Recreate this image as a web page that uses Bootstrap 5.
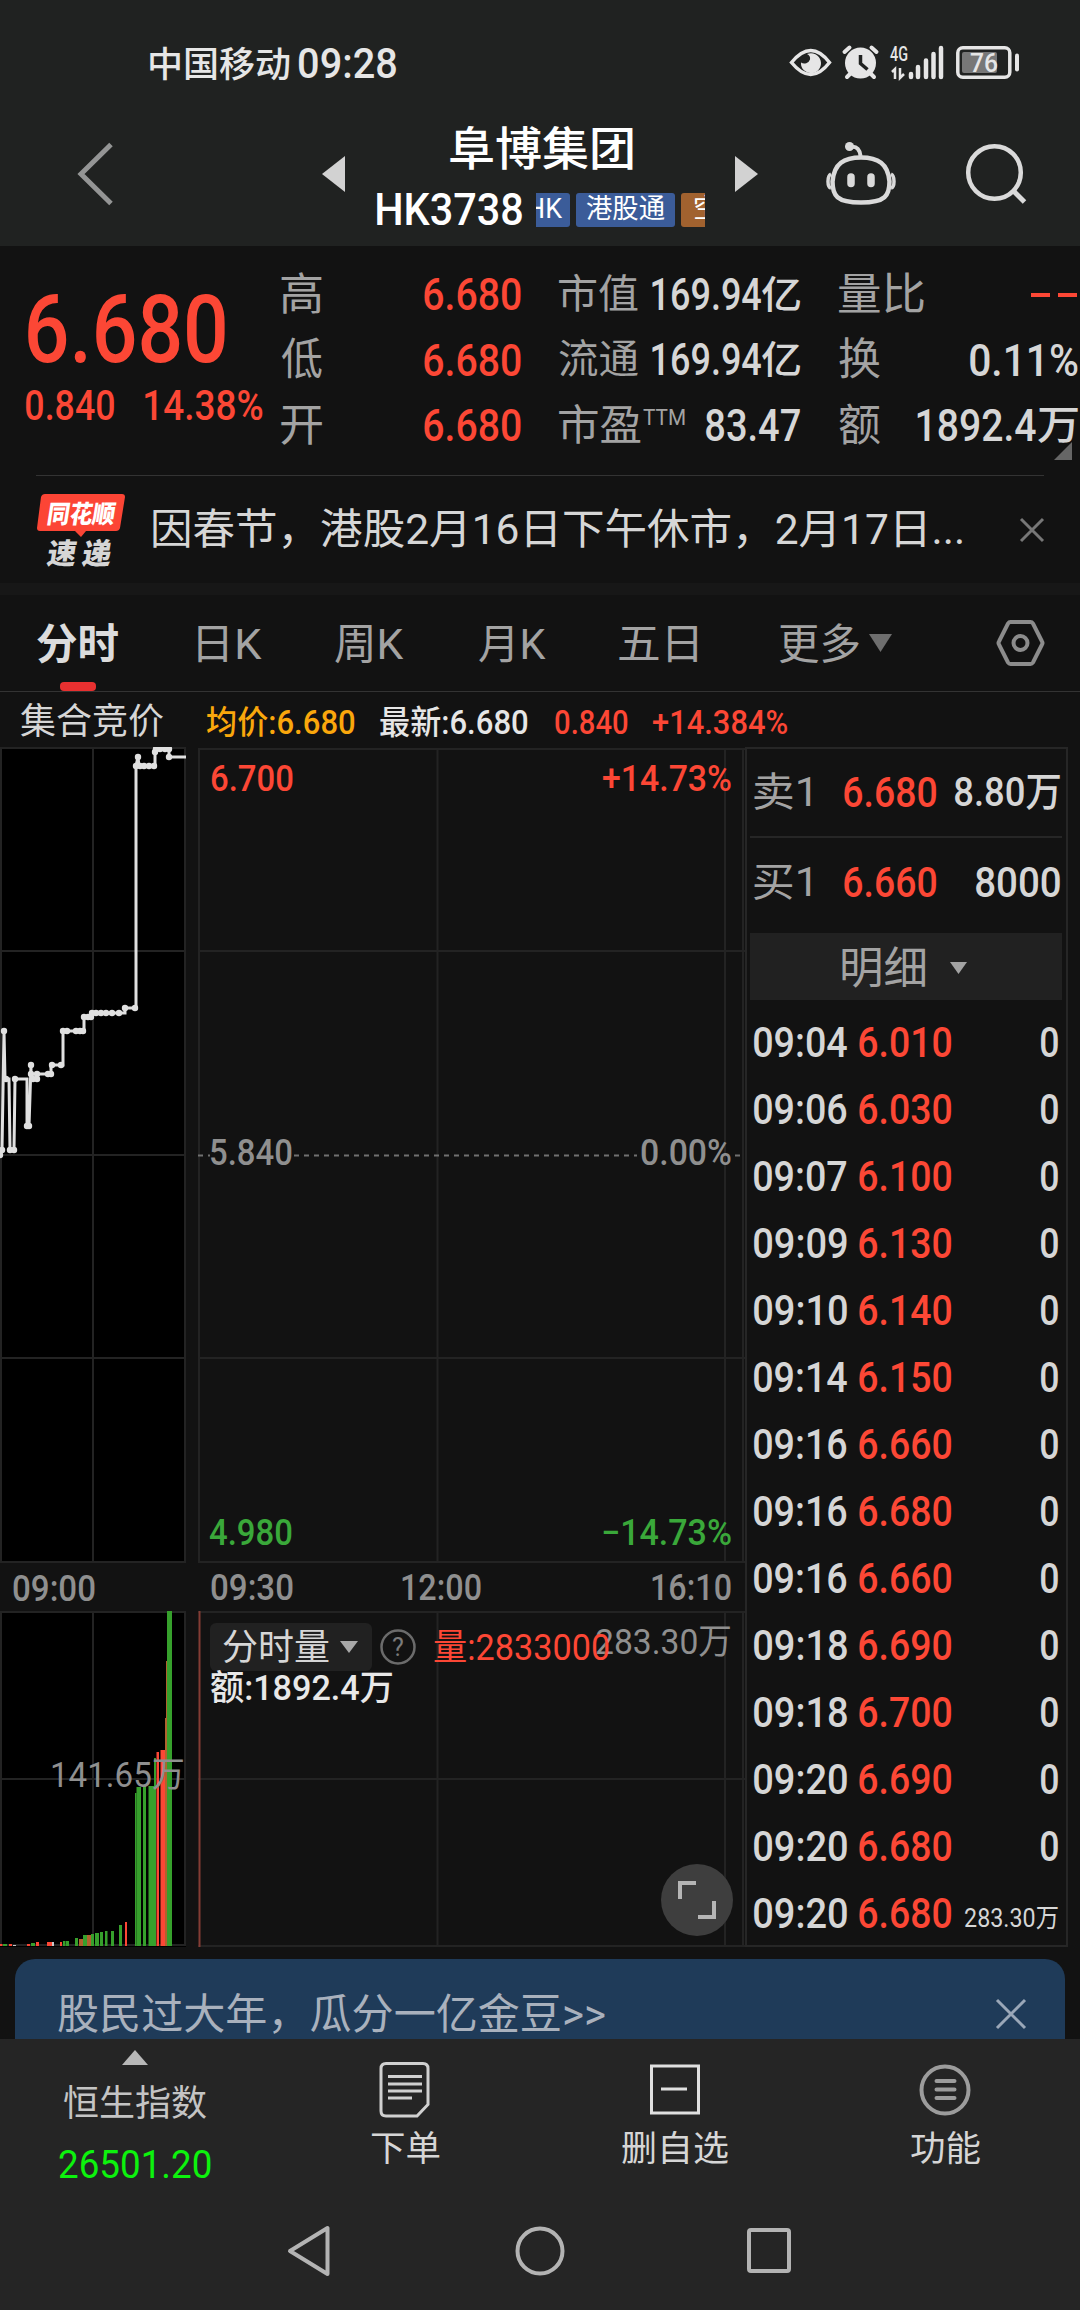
<!DOCTYPE html>
<html lang="zh-CN" data-bs-theme="dark">
<head>
<meta charset="utf-8">
<meta name="viewport" content="width=device-width, initial-scale=1">
<title>阜博集团 HK3738</title>
<link href="https://cdn.jsdelivr.net/npm/bootstrap@5.3.0/dist/css/bootstrap.min.css" rel="stylesheet">
<style>
:root{--up:#fc4735;--down:#3aa83a;--txt:#d6d6d6;--dim:#a3a3a3;--line:#262626;--panel:#121212;--bar:#252525}
body{width:1080px;height:2310px;margin:0;overflow:hidden;background:var(--panel);color:var(--txt);font-family:Roboto,"Noto Sans CJK SC",sans-serif;font-size:36px;line-height:1}
svg{display:block;flex:none;overflow:visible}
.ft{display:inline-block;white-space:nowrap;flex:none;overflow:visible;text-align:left}
.ft>span{display:inline-block;transform-origin:0 50%}
.n5{font-weight:500}
.up{color:var(--up)}.dim{color:var(--dim)}.amber{color:#faa70c}
.f26{font-size:26px}.f32{font-size:32px}.f33{font-size:33px}.f35{font-size:35px}.f36{font-size:36px}.f38{font-size:38px}.f40{font-size:40px}.f42{font-size:42px}.f44{font-size:44px}.f45{font-size:45px}.f46{font-size:46px}

.app-head{height:246px;background:#202221}
.statusbar{height:96px;padding:30px 61px 0 150px;color:#e6e6e6}
.titlebar{display:grid;grid-template-columns:245px 55px 358px 91px 140px auto;align-items:center;height:150px;padding:6px 0 0 77px}
.titlebox{width:328px;height:144px;padding-top:17px;color:#fff}
.tname{height:60px;margin-bottom:14px}
.tags{width:169px;height:34px;overflow:hidden;gap:6px}
.tg{height:34px;border-radius:3px;background:#3b5c99;font-size:27px;line-height:33px;flex:none}
.tg-a{width:34px;border-radius:0 3px 3px 0;overflow:hidden}
.tg-b{width:99px}
.tg-c{width:40px;background:#a1622f;padding-left:12px}

.quote{height:229px;padding-top:16px;display:grid;grid-template-columns:281px 278px 280px 241px}
.qprice{padding:28px 0 0 26px}
.qbig{font-size:94px;line-height:80px}
.qsub{gap:31px;line-height:40px;margin-top:16px}
.qrow{height:65.5px}
.qcol1{padding-right:38px}
.ttm{font-size:22px;margin-top:-16px;margin-left:2px}
.corner{right:8px;bottom:15px}

.news{height:108px;margin:0 36px;border-top:1px solid #333}
.news-logo{width:88px;margin-left:1px;margin-right:28px}
.strip{height:12px;background:#171717}
.ktabs{height:97px;padding:0 37px;border-bottom:1px solid #333;display:grid;grid-template-columns:161px 137px 144px 140px 160px 218px auto;align-items:center}
.ktabs>*{height:96px;display:flex;align-items:center;position:relative;padding-top:4px}
.ktabs>:last-child{padding-top:0}
.kline{position:absolute;left:23px;bottom:0;width:36px;height:9px;border-radius:4px;background:#e83030}
.legend{height:55px;padding-left:21px;display:grid;grid-template-columns:186px 173px 175px 98px auto;align-items:center;padding-top:5px}

.board{height:1200px}
.chart{width:745px;height:1200px}
.sel{left:210px;top:876px;width:162px;height:48px;border-radius:6px;background:#212121;padding:2px 0 0 13px;gap:11px}
.help{left:381px;top:882px}
.volnum{left:434px;top:883px;line-height:36px}
.amt{left:211px;top:924px;line-height:36px;color:#e8e8e8}
.expand{left:661px;top:1117px;width:72px;height:72px;background:#3e3e3e}
.book{width:323px;border:2px solid var(--line);padding:0 4px 0 3px}
.brow{height:89px;display:grid;grid-template-columns:90px 93px 1fr;align-items:center;padding-left:4px;padding-right:2px;border-bottom:2px solid var(--line)}
.brow+.brow{border-bottom:0;height:95px;padding-bottom:5px}
.bhead{height:67px;background:#212121;padding-left:92px;gap:25px}
.ticks{padding-top:9px}
.tick{height:67px;display:grid;grid-template-columns:105px 93px 1fr;align-items:center;padding:0 4px}

.promo{height:80px;margin:12px 15px 0;border-radius:20px 20px 0 0;background:#1f3b59;color:#a9b1bd;padding:30px 39px 0 43px}
.dock{height:140px;background:var(--bar);display:grid;grid-template-columns:270px 270px 270px 270px}
.dock>div{display:flex;flex-direction:column;align-items:center}
.dock-i{height:60px;margin-top:21px;margin-bottom:12px}
.gnav{height:131px;background:var(--bar);padding:46px 289px 0 287px}
</style>
<script src="https://cdn.jsdelivr.net/npm/bootstrap@5.3.0/dist/js/bootstrap.bundle.min.js"></script>
</head>
<body>
<header class="app-head">
  <div class="statusbar d-flex align-items-center">
    <span class="ft f35 n5 pt-1" data-w="140">中国移动</span><span class="ft f42 n5" data-w="97" style="margin-left:9px;padding-top:2px">09:28</span>
    <svg class="ms-auto" width="229" height="34" viewBox="790 45 229 34" fill="none" stroke="#e6e6e6">
      <path d="M791.500 61.500Q811 37.500 829.500 61.500Q811 85.500 791.500 61.500Z" stroke-width="3.500"/>
      <path d="M807 53a10 10 0 1 1-6 8.500a6 6 0 0 0 9-3 5 5 0 0 0-3-5.500z" fill="#e6e6e6" stroke="none"/>
      <circle cx="860.500" cy="62" r="15.500" fill="#e6e6e6" stroke="none"/>
      <path d="M844.500 51l5-4.500M876.500 51l-5-4.500M851 72l-4 4M870 72l4 4" stroke-width="4" stroke-linecap="round"/>
      <path d="M860.500 54v8.500l7 6" stroke="#202221" stroke-width="3.500"/>
      <path d="M892 71l3-3v10M900 67v10l4-4" stroke-width="2.500"/>
      <path d="M911 73v3M918 66v10M926 59.500v16.500M933.500 53v23M941 47v29" stroke-width="4.500" stroke-linecap="round"/>
      <rect x="957.800" y="46.800" width="52" height="29.500" rx="5" stroke-width="3.500"/>
      <rect x="962" y="51" width="35" height="21" rx="2" fill="#777" stroke="none"/>
      <path d="M1017 54.500v14" stroke-width="4" stroke-linecap="round"/>
      <g fill="#e6e6e6" stroke="none" font-weight="500"><text x="890" y="60" font-size="20" textLength="18" lengthAdjust="spacingAndGlyphs">4G</text><text x="970" y="71" font-size="25" textLength="28" lengthAdjust="spacingAndGlyphs">76</text></g>
    </svg>
  </div>
  <div class="titlebar">
    <svg width="36" height="62" viewBox="0 0 36 62" fill="none" stroke="#949595" stroke-width="5"><path d="M34 1.500L4 31l30 29.500"/></svg>
    <svg width="23" height="36"><path d="M23 0v36L0 18z" fill="#d2d2d2"/></svg>
    <div class="titlebox">
      <div class="tname d-flex align-items-center justify-content-center"><span class="ft f46 n5" data-w="183">阜博集团</span></div>
      <div class="d-flex align-items-center justify-content-between" style="height:34px"><span class="ft f44 n5" data-w="145">HK3738</span>
        <div class="tags d-flex"><div class="tg tg-a"><span class="ft" data-w="34" style="margin-left:-8px">HK</span></div><div class="tg tg-b d-flex justify-content-center"><span class="ft" data-w="79">港股通</span></div><div class="tg tg-c">空</div></div>
      </div>
    </div>
    <svg width="23" height="36"><path d="M0 0v36l23-18z" fill="#d2d2d2"/></svg>
    <svg width="70" height="64" viewBox="826 141 70 64" fill="none" stroke="#dadada" stroke-width="4.500"><path d="M861 156.500c17 0 27 6 28.500 24c0 14-4 21-28.500 21s-28.500-7-28.500-21c1.500-18 11.500-24 28.500-24z"/><path d="M851 146c6-1 9 3 9.500 9" stroke-width="4"/><circle cx="849.500" cy="145.500" r="4.500" fill="#dadada" stroke="none"/><path d="M831 173c-4 2-4 13 0 14M891 173c4 2 4 13 0 14" stroke-width="3.500"/><path d="M851 176v6.500M871 176v6.500" stroke-width="7.500" stroke-linecap="round"/></svg>
    <svg width="61" height="60" viewBox="966 144 61 60" fill="none" stroke="#dadada" stroke-width="4.500"><circle cx="994.500" cy="172.500" r="26.300"/><path d="M1013.500 191l11 11" stroke-width="5"/></svg>
  </div>
</header>

<section class="quote position-relative">
  <div class="qprice">
    <div class="qbig up n5"><span class="ft" data-w="197" style="margin-left:2px">6.680</span></div>
    <div class="qsub up d-flex f42 n5"><span class="ft" data-w="88">0.840</span><span class="ft" data-w="118">14.38%</span></div>
  </div>
  <div class="qcol1 f45 n5">
    <div class="qrow d-flex align-items-center justify-content-between"><span class="ft dim f44 fw-normal" data-w="41">高</span><span class="ft up" data-w="97">6.680</span></div>
    <div class="qrow d-flex align-items-center justify-content-between"><span class="ft dim f44 fw-normal" data-w="41">低</span><span class="ft up" data-w="97">6.680</span></div>
    <div class="qrow d-flex align-items-center justify-content-between"><span class="ft dim f44 fw-normal" data-w="41">开</span><span class="ft up" data-w="97">6.680</span></div>
  </div>
  <div class="f44" style="padding-right:39px">
    <div class="qrow d-flex align-items-center justify-content-between"><span class="ft dim f40" data-w="79">市值</span><span class="d-flex align-items-center"><span class="ft n5" data-w="109">169.94</span><span class="ft f38 n5" data-w="39">亿</span></span></div>
    <div class="qrow d-flex align-items-center justify-content-between"><span class="ft dim f40" data-w="79">流通</span><span class="d-flex align-items-center"><span class="ft n5" data-w="109">169.94</span><span class="ft f38 n5" data-w="39">亿</span></span></div>
    <div class="qrow d-flex align-items-center"><span class="ft dim f42" data-w="82">市盈</span><span class="ft dim ttm" data-w="42">TTM</span><span class="ft n5 f45 ms-auto" data-w="94">83.47</span></div>
  </div>
  <div class="f45" style="padding-right:2px">
    <div class="qrow d-flex align-items-center justify-content-between"><span class="ft dim f44" data-w="85">量比</span><svg width="47" height="4"><path d="M0 2h19M27 2h19" stroke="#fc4735" stroke-width="4"/></svg></div>
    <div class="qrow d-flex align-items-center justify-content-between"><span class="ft dim f44" data-w="41">换</span><span class="ft n5" data-w="108">0.11%</span></div>
    <div class="qrow d-flex align-items-center"><span class="ft dim f44" data-w="41">额</span><span class="ft n5 ms-auto" data-w="119">1892.4</span><span class="ft f40 n5" data-w="40" style="margin-left:2px">万</span></div>
  </div>
  <svg class="corner position-absolute" width="18" height="18"><path d="M18 0v18H0z" fill="#666"/></svg>
</section>

<section class="news d-flex align-items-center">
  <svg class="news-logo" width="88" height="72" viewBox="37 501 88 72"><path d="M45 501h77q3 0 3 3l-5 31q-1 3-4 3H86l-5 6-6-6H40q-3 0-3-3l4-31q1-3 4-3z" fill="#fc4535"/>
    <g font-family="Noto Sans CJK SC" font-weight="900" font-size="25"><text transform="translate(46 530) skewX(-9)" fill="#fff" textLength="68" lengthAdjust="spacingAndGlyphs">同花顺</text><text transform="translate(46 571) skewX(-9)" font-size="29" fill="#d6d6d6" textLength="29" lengthAdjust="spacingAndGlyphs">速</text><text transform="translate(81 571) skewX(-9)" font-size="29" fill="#d6d6d6" textLength="29" lengthAdjust="spacingAndGlyphs">递</text></g></svg>
  <span class="ft f42" data-w="809">因春节，港股2月16日下午休市，2月17日...</span>
  <svg class="ms-auto" width="24" height="24" viewBox="0 0 24 24" stroke="#777" stroke-width="3"><path d="M1 1l22 22M23 1L1 23"/></svg>
</section>
<div class="strip"></div>

<nav class="ktabs dim">
  <div><span class="ft f42 fw-bold" data-w="81" style="color:#dcdcdc">分时</span><i class="kline"></i></div>
  <div><span class="ft f42" data-w="64">日K</span></div>
  <div><span class="ft f42" data-w="69">周K</span></div>
  <div><span class="ft f42" data-w="67">月K</span></div>
  <div><span class="ft f42" data-w="78">五日</span></div>
  <div><span class="ft f42" data-w="80">更多</span><svg width="23" height="18" style="margin-left:10px;margin-top:-4px"><path d="M0 0h23L11.500 18z" fill="#6e6e6e"/></svg></div>
  <div><svg width="47" height="46" viewBox="997 620 47 46" fill="none" stroke="#8c8c8c" stroke-width="4"><path d="M1010.500 622h20q1.500 0 2.500 1.500l9 18q1 1.500 0 3l-9 18q-1 1.500-2.500 1.500h-20q-1.500 0-2.500-1.500l-9-18q-1-1.500 0-3l9-18q1-1.500 2.500-1.500z"/><circle cx="1020.500" cy="643" r="7"/></svg></div>
</nav>
<div class="legend">
  <span class="ft f36" data-w="142">集合竞价</span>
  <span class="ft amber f33 n5" data-w="148">均价:6.680</span>
  <span class="ft f33 n5" data-w="148" style="color:#e6e6e6">最新:6.680</span>
  <span class="ft up f33 n5" data-w="73">0.840</span>
  <span class="ft up f33 n5" data-w="134">+14.384%</span>
</div>

<main class="board d-flex">
  <div class="chart position-relative">
    <svg width="745" height="1200" viewBox="0 747 745 1200" id="chartSvg">
      <path d="M0 747h186v816H0zM0 1611h186v336H0z" fill="#000"/>
      <g fill="none" stroke="#232323" stroke-width="2">
        <path d="M1 747v816M93 747v816M185 747v816M0 748h186M0 951h186M0 1155h186M0 1358h186M0 1562h186"/>
        <path d="M1 1611v335M93 1611v335M185 1611v335M0 1612h186M0 1779h186M0 1945h186"/>
        <path d="M199 748v815M437.500 748v815M725 748v815M743 748v815M198 749h547M198 951h547M198 1358h547M198 1562h547"/>
        <path d="M437.500 1611v335M725 1611v335M743 1611v335M198 1612h547M198 1779h547M198 1946h547"/>
      </g>
      <path d="M198 1155.500h12M294 1155.500h343M735 1155.500h10" stroke="#707070" stroke-width="2" stroke-dasharray="5 5"/>
      <path d="M199.500 1611v336" stroke="#843c34" stroke-width="2"/>
      <g id="bars"></g>
      <clipPath id="cp"><rect x="0" y="747" width="186" height="420"/></clipPath>
      <g clip-path="url(#cp)"><path id="pl" fill="none" stroke="#e0e0e0" stroke-width="3"/><g id="dots" fill="#e0e0e0"></g></g>
      <g font-size="36" font-weight="500" fill="#8f8f8f" id="lbl">
        <text x="12" y="1601" textLength="84" lengthAdjust="spacingAndGlyphs">09:00</text>
        <text x="210" y="1600" textLength="84" lengthAdjust="spacingAndGlyphs">09:30</text>
        <text x="400" y="1600" textLength="82" lengthAdjust="spacingAndGlyphs">12:00</text>
        <text x="650" y="1600" textLength="82" lengthAdjust="spacingAndGlyphs">16:10</text>
        <g fill="#fc4735"><text x="210" y="791" textLength="84" lengthAdjust="spacingAndGlyphs">6.700</text><text x="602" y="791" textLength="130" lengthAdjust="spacingAndGlyphs">+14.73%</text></g>
        <text x="209" y="1165" textLength="84" lengthAdjust="spacingAndGlyphs">5.840</text><text x="640" y="1165" textLength="92" lengthAdjust="spacingAndGlyphs">0.00%</text>
        <g fill="#3aa83a"><text x="209" y="1545" textLength="84" lengthAdjust="spacingAndGlyphs">4.980</text><text x="601" y="1545" textLength="131" lengthAdjust="spacingAndGlyphs">−14.73%</text></g>
        <g font-size="35" font-weight="400"><text x="50" y="1787" textLength="135" lengthAdjust="spacingAndGlyphs">141.65万</text>
        <text x="595" y="1654" textLength="137" lengthAdjust="spacingAndGlyphs">283.30万</text></g>
      </g>
    </svg>
    <div class="sel position-absolute d-flex align-items-center"><span class="ft f36" data-w="106">分时量</span><svg width="18" height="12" style="margin-top:-3px"><path d="M0 0h18L9 12z" fill="#a8a8a8"/></svg></div>
    <svg class="help position-absolute" width="36" height="36" viewBox="0 0 36 36"><circle cx="17" cy="18" r="16.500" fill="none" stroke="#6b6b6b" stroke-width="2.500"/><text x="17" y="27" font-size="25" text-anchor="middle" fill="#7b7b7b">?</text></svg>
    <div class="volnum position-absolute up f36"><span class="ft" data-w="175">量:2833000</span></div>
    <div class="amt position-absolute f35 n5"><span class="ft" data-w="181">额:1892.4万</span></div>
    <div class="expand position-absolute rounded-circle d-flex align-items-center justify-content-center"><svg width="38" height="38" fill="none" stroke="#b5b5b5" stroke-width="4"><path d="M2 18V2h16M36 20v16H20"/></svg></div>
  </div>
  <div class="book">
    <div class="brow f42 n5"><span class="ft dim f40 fw-normal" data-w="57">卖1</span><span class="ft up" data-w="92">6.680</span><span class="d-flex justify-content-end"><span class="ft f40" data-w="105">8.80万</span></span></div>
    <div class="brow f42 n5"><span class="ft dim f40 fw-normal" data-w="57">买1</span><span class="ft up" data-w="92">6.660</span><span class="d-flex justify-content-end"><span class="ft" data-w="84">8000</span></span></div>
    <div class="bhead d-flex align-items-center dim"><span class="ft f44" data-w="83" style="padding-top:5px">明细</span><svg width="17" height="12" style="margin-top:3px"><path d="M0 0h17L8.500 12z" fill="#a3a3a3"/></svg></div>
    <div class="ticks" id="ticks"></div>
  </div>
</main>

<section class="promo d-flex justify-content-between"><span class="ft f42" data-w="547" style="height:50px;line-height:52px">股民过大年，瓜分一亿金豆&gt;&gt;</span><svg width="30" height="30" style="margin-top:10px" stroke="#9aa7b8" stroke-width="3"><path d="M1 1l28 28M29 1L1 29"/></svg></section>
<footer>
  <div class="dock">
    <div style="padding-top:11px"><svg width="26" height="15"><path d="M0 15h26L13 0z" fill="#b8b8b8"/></svg><span class="ft f36" data-w="142" style="margin-top:21px;color:#c4c4c4">恒生指数</span><span class="ft f38" data-w="152" style="margin-top:24px;color:#0df20d">26501.20</span></div>
    <div><svg class="dock-i" width="50" height="60" viewBox="380 2060 50 60" fill="none" stroke="#d0d0d0" stroke-width="3"><path d="M386 2063.500h37q5 0 5 5v36l-11 11.500h-31q-5 0-5-5v-42.500q0-5 5-5z"/><path d="M388 2076.500h34M388 2084h34M388 2091h34M388 2098h24"/></svg><span class="ft f35" data-w="69">下单</span></div>
    <div><svg class="dock-i" width="50" height="60" viewBox="650 2060 50 60" fill="none" stroke="#e0e0e0" stroke-width="3"><path d="M651.500 2066h47v47h-47zM661 2089h26"/></svg><span class="ft f35" data-w="106">删自选</span></div>
    <div><svg class="dock-i" width="52" height="60" viewBox="918 2060 52 60" fill="none" stroke="#9c9c9c" stroke-width="4"><circle cx="944" cy="2090" r="23.500"/><path d="M935.500 2081h18M935.500 2089.500h18M935.500 2098h18" stroke-linecap="round"/></svg><span class="ft f35" data-w="69">功能</span></div>
  </div>
  <div class="gnav d-flex align-items-start justify-content-between">
    <svg width="43" height="52" viewBox="287 2225 43 52" fill="none" stroke="#b3b3b3" stroke-width="4" stroke-linejoin="round"><path d="M327.500 2228v46L290 2251z"/></svg>
    <svg width="50" height="52" viewBox="514 2225 50 52" fill="none" stroke="#b3b3b3" stroke-width="4"><circle cx="540" cy="2251" r="22.500"/></svg>
    <svg width="44" height="52" viewBox="747 2225 44 52" fill="none" stroke="#b3b3b3" stroke-width="4"><rect x="749" y="2230" width="40" height="41" rx="2"/></svg>
  </div>
</footer>
<script>
// Latest trades: time, price, volume
const trades = [["09:04","6.010","0"],["09:06","6.030","0"],["09:07","6.100","0"],["09:09","6.130","0"],["09:10","6.140","0"],["09:14","6.150","0"],["09:16","6.660","0"],["09:16","6.680","0"],["09:16","6.660","0"],["09:18","6.690","0"],["09:18","6.700","0"],["09:20","6.690","0"],["09:20","6.680","0"],["09:20","6.680","283.30万"]];
document.getElementById("ticks").innerHTML = trades.map(([t,p,v]) =>
  `<div class="tick f42 n5"><span class="ft" data-w="93">${t}</span><span class="ft up" data-w="92">${p}</span><span class="d-flex justify-content-end"><span class="ft ${v==="0"?"":"f26 fw-normal pt-2"}" data-w="${v==="0"?17:93}">${v}</span></span></div>`).join("");

// Pre-open auction price line
const pts = [[0,1155],[2,1150],[4,1031],[5,1079],[9,1079],[10,1150],[14,1150],[15,1079],[27,1079],[27,1126],[29,1126],[31,1065],[31,1079],[37,1079],[37,1074],[51,1074],[51,1065],[63,1065],[63,1031],[84,1031],[84,1017],[91,1017],[91,1013],[125,1013],[125,1008],[136,1008],[136,766],[138,757],[139,766],[155,766],[155,749],[169,749],[169,757],[186,757]];
document.getElementById("pl").setAttribute("d","M"+pts.map(p=>p.join(" ")).join("L"));
const dots = [[0,1155],[2,1150],[4,1031],[6,1079],[10,1150],[14,1150],[15,1079],[27,1126],[29,1126],[31,1065],[31,1074],[33,1079],[37,1079],[37,1074],[48,1074],[51,1074],[52,1065],[61,1065],[63,1031],[67,1031],[76,1031],[80,1031],[83,1031],[84,1017],[88,1017],[91,1017],[92,1013],[96,1013],[101,1013],[106,1013],[112,1013],[119,1013],[125,1008],[135,1008],[136,766],[138,757],[140,766],[144,766],[149,766],[154,766],[155,752],[156,749],[160,749],[165,749],[169,749],[169,757]];
document.getElementById("dots").innerHTML = dots.map(([x,y])=>`<circle cx="${x}" cy="${y}" r="3.200"/>`).join("");

// Auction volume bars: left, width, top, colour
const G="#36a02c",R="#fc4735",O="#b0622e",W="#c8c8c8";
const bars = [[0,2.5,1944,R],[3,4,1944,G],[9,3,1944,R],[13,3,1945,W],[27,3,1944,R],[31,4,1943,G],[36,3,1942,R],[47,5,1942,R],[52,2,1942,W],[60,2,1942,R],[63,2.5,1941,G],[66,3,1941,G],[75,3,1938,G],[79,4,1939,O],[83,4,1935,G],[87,4,1935,O],[91,3,1934,G],[95,4,1933,G],[100,3,1932,G],[105,2.5,1931,G],[111,3,1931,G],[119,3,1925,G],[125,2,1922,R],[135,1.5,1793,G],[136.5,4.5,1787,G],[143,3,1786,G],[148.500,7.500,1786,G],[154,2,1758,G],[156.500,2.500,1752,R],[160.500,5.500,1750,R],[165,2,1718,O],[166,1.500,1661,O],[167,5,1611,G]];
document.getElementById("bars").innerHTML = bars.map(([x,w,y,c])=>`<rect x="${x}" y="${y}" width="${w}" height="${1946-y}" fill="${c}"/>`).join("");

// Condense each label so that its drawn width equals data-w
const ctx = document.createElement("canvas").getContext("2d");
document.querySelectorAll(".ft").forEach(el => {
  const cs = getComputedStyle(el), w = +el.dataset.w, s = document.createElement("span");
  ctx.font = `${cs.fontWeight} ${cs.fontSize} ${cs.fontFamily}`;
  const m = ctx.measureText(el.textContent), l = m.actualBoundingBoxLeft, k = w / (l + m.actualBoundingBoxRight);
  s.textContent = el.textContent; el.textContent = ""; el.appendChild(s);
  s.style.transform = `translateX(${l*k}px) scaleX(${k})`;
  s.style.marginRight = `-${Math.ceil(m.width)}px`;
  el.style.width = w + "px";
});
</script>
</body>
</html>
